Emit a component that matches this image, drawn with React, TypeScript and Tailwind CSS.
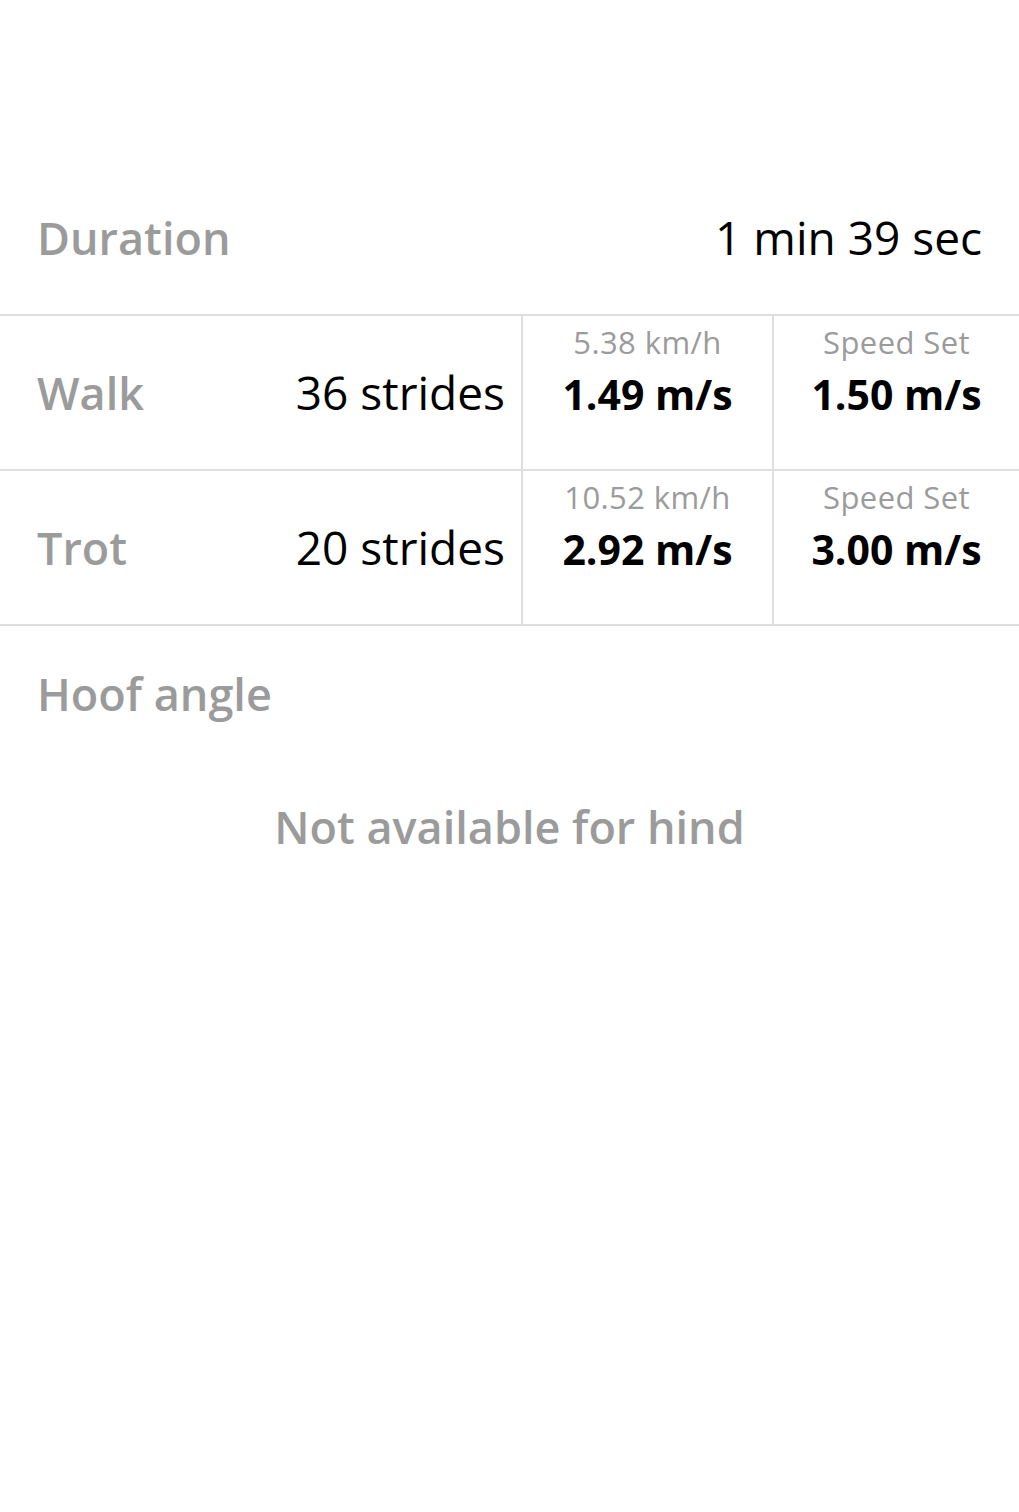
import React from 'react';

const gaits = [
  { name: 'Walk', strides: '36 strides', kmh: '5.38 km/h', speed: '1.49 m/s', set: '1.50 m/s' },
  { name: 'Trot', strides: '20 strides', kmh: '10.52 km/h', speed: '2.92 m/s', set: '3.00 m/s' },
];

const App = () => {
  return (
    <div className="min-h-[1512px] w-full bg-white font-['Open_Sans',sans-serif]">
      <div className="h-[161px]"></div>

      {/* Duration */}
      <div className="flex h-[155px] items-center justify-between px-[37px] border-b-2 border-[#dedede]">
        <span className="text-[45px] font-semibold text-[#9b9b9b]">Duration</span>
        <span className="text-[46px] text-black">1 min 39 sec</span>
      </div>

      {/* Gait rows */}
      {gaits.map((g) => (
        <div key={g.name} className="flex h-[155px] border-b-2 border-[#dedede]">
          <div className="flex w-[521px] items-center justify-between pl-[37px] pr-[16px]">
            <span className="text-[45px] font-semibold text-[#9b9b9b]">{g.name}</span>
            <span className="text-[46px] text-black">{g.strides}</span>
          </div>
          <div className="flex w-[251px] flex-col items-center border-l-2 border-[#dedede] pt-[8px]">
            <span className="text-[31px] leading-[36px] tracking-[0.4px] text-[#9b9b9b]">{g.kmh}</span>
            <span className="mt-[8px] text-[41px] font-bold leading-[52px] text-black">{g.speed}</span>
          </div>
          <div className="flex flex-1 flex-col items-center border-l-2 border-[#dedede] pt-[8px]">
            <span className="text-[31px] leading-[36px] tracking-[0.4px] text-[#9b9b9b]">Speed Set</span>
            <span className="mt-[8px] text-[41px] font-bold leading-[52px] text-black">{g.set}</span>
          </div>
        </div>
      ))}

      {/* Hoof angle */}
      <div className="px-[37px] pt-[38px]">
        <div className="text-[45px] font-semibold leading-[60px] text-[#9b9b9b]">Hoof angle</div>
        <div className="mt-[73px] text-center text-[45px] font-semibold leading-[60px] text-[#9b9b9b]">
          Not available for hind
        </div>
      </div>
    </div>
  );
};

export default App;
